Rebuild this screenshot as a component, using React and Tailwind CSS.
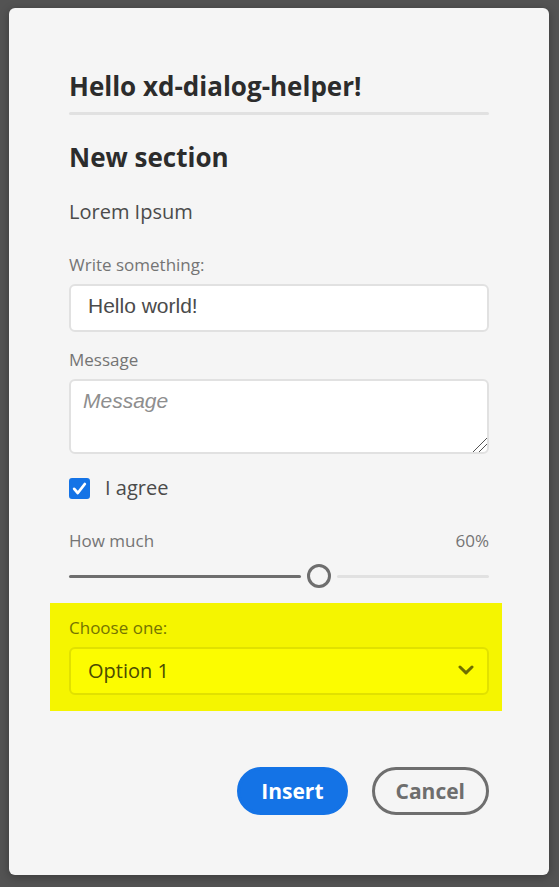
import { useState } from "react";

const fieldLabel = "text-[17px] leading-6 text-[#747474]";
const fieldBox =
  "mt-[7px] block w-full rounded-md border-2 border-[#e1e1e1] bg-white font-['Liberation_Sans',sans-serif] text-[21px] leading-6 text-[#4b4b4b] outline-none";
const pill = "h-12 rounded-full border-[3px] px-[21px] text-[21px] leading-6 font-bold";

function Slider({ id, value, onChange }) {
  return (
    <div className="grid h-6 items-center">
      <div className="col-start-1 row-start-1 flex gap-9">
        <span
          className="h-[3px] shrink-0 rounded-full bg-[#6e6e6e]"
          style={{ width: `calc((100% - 24px) * ${value / 100} - 6px)` }}
        />
        <span className="h-[3px] flex-1 rounded-full bg-[#e1e1e1]" />
      </div>
      <input
        id={id}
        type="range"
        min="0"
        max="100"
        value={value}
        onChange={(e) => onChange(Number(e.target.value))}
        className="col-start-1 row-start-1 m-0 h-6 w-full appearance-none bg-transparent outline-none [&::-webkit-slider-thumb]:size-6 [&::-webkit-slider-thumb]:appearance-none [&::-webkit-slider-thumb]:rounded-full [&::-webkit-slider-thumb]:border-[3px] [&::-webkit-slider-thumb]:border-solid [&::-webkit-slider-thumb]:border-[#6e6e6e] [&::-webkit-slider-thumb]:bg-[#f5f5f5]"
      />
    </div>
  );
}

export default function App() {
  const [name, setName] = useState("Hello world!");
  const [message, setMessage] = useState("");
  const [agree, setAgree] = useState(true);
  const [amount, setAmount] = useState(60);
  const [choice, setChoice] = useState("1");

  return (
    <div className="min-h-screen bg-[#535353] pt-2 pr-2.5 pb-3 pl-[9px] font-['Open_Sans','Noto_Sans',sans-serif]">
      <form
        role="dialog"
        aria-labelledby="dialog-title"
        onSubmit={(e) => e.preventDefault()}
        className="rounded-md bg-[#f5f5f5] px-[60px] py-15 shadow-[0_2px_10px_rgba(0,0,0,0.3)]"
      >
        <h1 id="dialog-title" className="text-[26px] leading-9 font-bold text-[#2c2c2c]">
          Hello xd-dialog-helper!
        </h1>
        <hr className="mt-2 h-[3px] rounded-full border-0 bg-[#e1e1e1]" />

        <h2 className="mt-6 text-[26px] leading-9 font-bold text-[#2c2c2c]">New section</h2>
        <p className="mt-[21px] text-xl leading-8 text-[#4b4b4b]">Lorem Ipsum</p>

        <div className="mt-[25px]">
          <label htmlFor="name" className={`${fieldLabel} block`}>Write something:</label>
          <input
            id="name"
            type="text"
            value={name}
            onChange={(e) => setName(e.target.value)}
            className={`${fieldBox} h-12 px-[17px] pb-1`}
          />
        </div>

        <div className="mt-4">
          <label htmlFor="message" className={`${fieldLabel} block`}>Message</label>
          <textarea
            id="message"
            placeholder="Message"
            value={message}
            onChange={(e) => setMessage(e.target.value)}
            className={`${fieldBox} h-[75px] resize px-3 py-2 placeholder:text-[#8e8e8e] placeholder:italic [&::-webkit-resizer]:bg-[linear-gradient(135deg,transparent_52%,#555_52%,#555_55%,transparent_55%,transparent_72%,#555_72%,#555_75%,transparent_75%)]`}
          />
        </div>

        <label className="mt-[18px] flex h-8 items-center gap-[15px] text-xl text-[#4b4b4b]">
          <span className="grid size-[21px]">
            <input
              type="checkbox"
              checked={agree}
              onChange={(e) => setAgree(e.target.checked)}
              className="peer col-start-1 row-start-1 size-[21px] appearance-none rounded-[3px] border-2 border-[#6e6e6e] bg-white checked:border-[#1473e6] checked:bg-[#1473e6]"
            />
            <svg
              viewBox="0 0 21 21"
              fill="none"
              stroke="white"
              strokeWidth="2.8"
              strokeLinecap="round"
              strokeLinejoin="round"
              aria-hidden="true"
              className="pointer-events-none invisible z-10 col-start-1 row-start-1 size-[21px] peer-checked:visible"
            >
              <path d="M5.2 10.9 8.8 15 15.8 6" />
            </svg>
          </span>
          I agree
        </label>

        <div className="mt-[25px]">
          <div className={`${fieldLabel} flex justify-between`}>
            <label htmlFor="amount">How much</label>
            <output htmlFor="amount">{amount}%</output>
          </div>
          <div className="mt-[11px]">
            <Slider id="amount" value={amount} onChange={setAmount} />
          </div>
        </div>

        <div className="mt-[15px] -mr-[13px] -ml-[19px] bg-[#f5f500] pt-[13px] pr-[13px] pb-4 pl-[19px]">
          <label htmlFor="choice" className="block text-[17px] leading-6 text-[#747400]">
            Choose one:
          </label>
          <div className="mt-[7px] grid items-center">
            <select
              id="choice"
              value={choice}
              onChange={(e) => setChoice(e.target.value)}
              className="col-start-1 row-start-1 h-12 w-full appearance-none rounded-md border-2 border-[#e1e100] bg-[#fcfc00] px-[17px] text-xl text-[#4b4b00] outline-none"
            >
              <option value="1">Option 1</option>
              <option value="2">Option 2</option>
            </select>
            <svg
              viewBox="0 0 16 10"
              fill="none"
              stroke="#6e6e00"
              strokeWidth="3"
              strokeLinecap="round"
              strokeLinejoin="round"
              aria-hidden="true"
              className="pointer-events-none z-10 col-start-1 row-start-1 mr-[15px] mb-0.5 h-2.5 w-4 justify-self-end"
            >
              <path d="M2 2 8 7.8 14 2" />
            </svg>
          </div>
        </div>

        <div className="mt-14 flex justify-end gap-6">
          <button type="submit" className={`${pill} border-[#1473e6] bg-[#1473e6] text-white`}>
            Insert
          </button>
          <button type="button" className={`${pill} border-[#6e6e6e] text-[#6e6e6e]`}>
            Cancel
          </button>
        </div>
      </form>
    </div>
  );
}
